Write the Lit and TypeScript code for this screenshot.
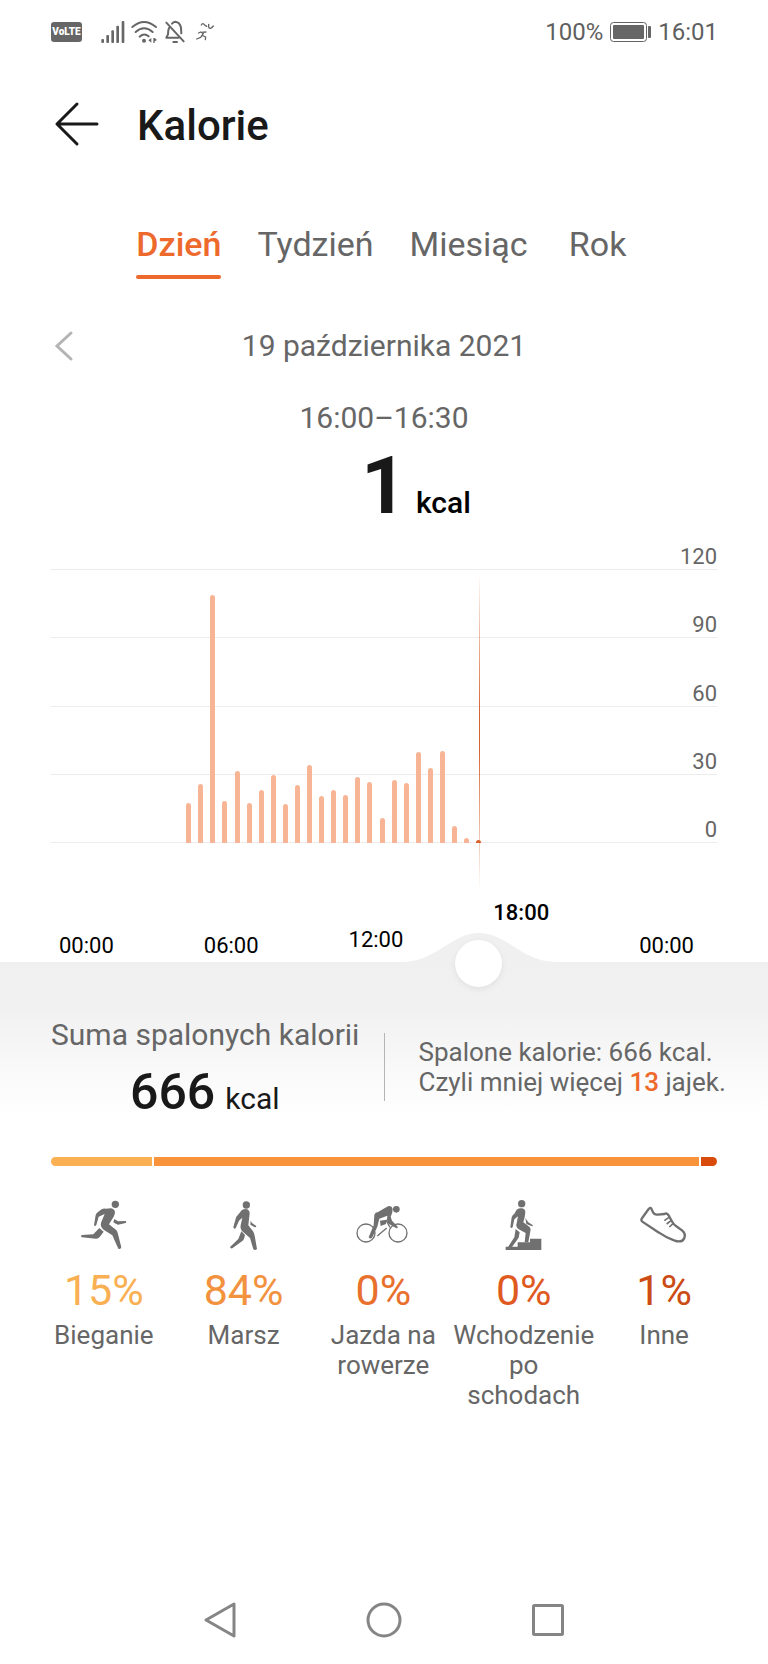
import { LitElement, html, svg, css, type TemplateResult } from "lit";
import { customElement, property, state } from "lit/decorators.js";
import { classMap } from "lit/directives/class-map.js";
import { styleMap } from "lit/directives/style-map.js";

const SLOTS = 48;
const MAX = 120;
const FIRST_SLOT = 8;
const VALUES = [
  17.5, 26, 109, 18.5, 31.5, 17.5, 23.5, 30, 17, 25.5, 34.5, 20.5, 23.5, 21,
  29, 27, 11, 27.5, 26.5, 40, 33, 40.5, 7.5, 2, 1.5,
];

const ICONS: Record<string, TemplateResult> = {
  run: svg`
    <circle cx="109" cy="13" r="11"/>
    <path d="M45 76 50 45Q52 39 57 36L68 28Q73 25 80 26L96 25Q106 27 108 36 108 43 104 50L90 73Q98 80 108 87 114 91 116 98L127 142Q125 149 118 146L100 106 75 90Q63 81 66 68L77 42 59 50 52 75Q48 80 45 76Z"/>
    <path d="M106 57 117 64 140 63Q144 66 140 69L117 74Q111 73 103 67Z"/>
    <path d="M61 84 74 95 62 111Q57 117 50 116L9 112Q3 108 9 105L43 103Z"/>`,
  walk: svg`
    <circle cx="82" cy="15" r="11"/>
    <path d="M43 82 50 56Q51 50 56 46L68 31Q73 27 81 27 92 29 92 40L88 76 102 94Q106 100 107 107L114 147Q109 152 103 148L93 114 69 93Q63 86 65 76L70 53 60 62 50 85Q45 89 43 82Z"/>
    <path d="M95 62 99 69 112 78Q111 83 106 81L94 74Z"/>
    <path d="M67 94 78 105 76 113Q75 118 70 123L40 145Q34 146 33 141L58 117Z"/>`,
  bike: svg`
    <circle class="line" cx="24" cy="99" r="27"/>
    <circle class="line" cx="120" cy="99" r="27"/>
    <circle cx="115" cy="28" r="10"/>
    <path d="M47 76 49 44Q52 37 60 36L90 19Q101 16 104 26 104 40 98 50L102 62 119 80Q120 87 114 84L93 72Q87 68 87 60L88 47 64 56 58 80 43 112Q37 119 32 112Z"/>
    <path d="M66 62 86 59 84 72 68 78Z"/>
    <path class="line" d="M86 84 58 108M84 60 96 82"/>`,
  stairs: svg`
    <circle cx="68" cy="11" r="11"/>
    <path d="M34 81 38 52Q40 45 46 41L53 29Q60 24 69 25 79 27 79 37 78 52 73 67L89 79Q97 85 94 94L88 127H77L80 99 58 87Q49 80 53 70L57 49 46 58 41 82Q37 86 34 81Z"/>
    <path d="M79 54 88 67 102 76 99 79 82 72Z"/>
    <path d="M50 87 62 97 59 113 39 141H27L46 112Z"/>
    <path d="M20 150V140H56V127H93V116H127V150Z"/>`,
  shoe: svg`
    <path class="outline" d="M37 26 42 37Q46 45 56 44L76 42Q83 38 88 45L100 66Q104 74 112 79L130 92Q141 102 136 114 130 130 105 121 80 112 60 98L10 65Q4 60 10 53L29 27Q34 21 37 26Z"/>
    <path class="lace" d="M76 62 90 52M83 72 96 62M91 81 102 71"/>`,
};

@customElement("status-bar")
class StatusBar extends LitElement {
  static styles = css`
    :host { display: flex; justify-content: space-between; align-items: center;
      height: 64px; padding: 0 50px 0 51px; color: #5f5f5f; font-size: 24px; line-height: 32px; }
    .group { display: flex; align-items: center; }
    .volte { background: #666; color: #fff; border-radius: 3px; width: 31px; height: 20px;
      line-height: 20px; font-size: 10px; font-weight: 900; text-align: center; margin-right: 19px; }
    svg { display: block; fill: #666; overflow: visible; }
    .stroke { fill: none; stroke: #666; stroke-width: 6; stroke-linecap: round; stroke-linejoin: round; }
    .thin { stroke-width: 4; }
    .signal { margin-right: 6px; }
    .wifi { margin-right: 7px; }
    .bell { margin-right: 11px; }
    .battery { margin: 0 7px; }
    .shell { fill: none; stroke: #666; stroke-width: 1; }
  `;
  render() {
    return html`
      <div class="group">
        <span class="volte">VoLTE</span>
        <svg class="signal" width="24" height="22" viewBox="0 0 72 66" aria-hidden="true">
          <rect x="1" y="54" width="8" height="12" rx="3"/><rect x="16" y="42" width="8" height="24" rx="3"/>
          <rect x="31" y="28" width="8" height="38" rx="3"/><rect x="46" y="14" width="8" height="52" rx="3"/>
          <rect x="62" y="0" width="8" height="66" rx="3"/>
        </svg>
        <svg class="wifi" width="27" height="22" viewBox="0 0 81 66" aria-hidden="true">
          <path class="stroke" d="M4 18Q39-12 75 18M14 33Q39 11 65 33M26 47Q39 35 53 46"/>
          <circle cx="39" cy="59" r="6"/>
          <path d="M61 51V65L52 58ZM67 51H71L78 57 71 61V66H67Z"/>
        </svg>
        <svg class="bell" width="20" height="22" viewBox="0 0 60 66" aria-hidden="true">
          <path class="stroke" d="M4 5 56 61M12 21Q9 28 9 40L4 50H40M21 8Q25 3 31 2 45 4 48 20L49 37M25 63H36"/>
        </svg>
        <svg width="18" height="18" viewBox="0 0 54 54" aria-hidden="true">
          <path class="stroke thin" d="M2 48 14 43 22 31 14 27 8 30M16 28 30 27M20 38 29 42 28 50M16 6Q20-2 26 6L32 10M38 4V12Q42 22 52 9"/>
        </svg>
      </div>
      <div class="group">
        <span>100%</span>
        <svg class="battery" width="41" height="20" viewBox="0 0 41 20" aria-hidden="true">
          <rect class="shell" x="0.5" y="0.5" width="36" height="19" rx="3"/>
          <rect x="3" y="3" width="31" height="14" rx="1"/><rect x="38" y="4" width="3" height="12" rx="1"/>
        </svg>
        <span>16:01</span>
      </div>`;
  }
}

@customElement("calorie-chart")
class CalorieChart extends LitElement {
  @property({ type: Number }) selected = 32;

  static styles = css`
    :host { display: block; position: relative; padding: 0 51px; }
    .plot { display: grid; height: 298px; }
    .ticks, .bars { grid-area: 1 / 1; }
    .ticks { display: grid; grid-template-rows: 25px repeat(4, 1fr); color: #666;
      font-size: 22px; line-height: 24px; text-align: right; }
    .tick { display: flex; align-items: flex-end; justify-content: flex-end; border-bottom: 1px solid #ececec; }
    .bars { display: grid; grid-template-columns: repeat(48, 1fr); align-items: end;
      margin: 25px 51px 0 35px; }
    .bar { justify-self: center; width: 5px; background: #f8b595; border-radius: 3px 3px 0 0; }
    .active { background: #d9602c; }
    .axis { display: flex; justify-content: space-between; align-items: flex-end;
      height: 119px; padding: 0 23px 0 8px; color: #000; font-size: 22px; line-height: 24px; }
    .time { padding-bottom: 4px; }
    .near { padding-bottom: 10px; }
    .over { padding-bottom: 37px; font-weight: 500; }
    .marker { position: absolute; inset: 0 102px 0 86px; pointer-events: none; }
    .cursor { position: absolute; top: 27px; bottom: 72px; width: 1px;
      background: linear-gradient(transparent, #d5622f 45%, #d5622f 55%, transparent); }
    .bump { position: absolute; bottom: 0; width: 156px; height: 29px; margin-left: -78px; fill: #f0f0f0; }
    .scrub { position: absolute; left: 68px; right: 84px; bottom: -25px; height: 47px; margin: 0;
      appearance: none; background: none; outline: none; }
    .scrub::-webkit-slider-thumb { appearance: none; width: 47px; height: 47px; border-radius: 50%;
      background: #fff; box-shadow: 0 2px 6px rgba(0, 0, 0, 0.07); }
  `;

  private move(e: Event) {
    const detail = Number((e.target as HTMLInputElement).value);
    this.dispatchEvent(new CustomEvent("slot-change", { detail }));
  }

  render() {
    const left = `${((this.selected + 0.5) / SLOTS) * 100}%`;
    const times: [string, string][] = [["00:00", ""], ["06:00", ""], ["12:00", "near"], ["18:00", "over"], ["00:00", ""]];
    return html`
      <div class="plot">
        <div class="ticks">${[120, 90, 60, 30, 0].map((t) => html`<div class="tick">${t}</div>`)}</div>
        <div class="bars">
          ${VALUES.map((v, i) => html`<div
            class=${classMap({ bar: true, active: i + FIRST_SLOT === this.selected })}
            style=${styleMap({ gridColumn: `${i + FIRST_SLOT + 1}`, height: `${(v / MAX) * 100}%` })}></div>`)}
        </div>
      </div>
      <div class="axis">${times.map(([t, c]) => html`<span class="time ${c}">${t}</span>`)}</div>
      <div class="marker">
        <div class="cursor" style=${styleMap({ left })}></div>
        <svg class="bump" style=${styleMap({ left })} viewBox="0 0 156 29" aria-hidden="true">
          <path d="M0 29C36 29 50 0 78 0S120 29 156 29Z"/>
        </svg>
      </div>
      <input class="scrub" type="range" min="0" max="47" aria-label="Godzina"
        .value=${String(this.selected)} @input=${this.move}>`;
  }
}

@customElement("app-root")
class AppRoot extends LitElement {
  @state() private slotIndex = 32;
  @state() private tab = "Dzień";

  static styles = css`
    :host { display: flex; flex-direction: column; min-height: 100vh; background: #fff;
      font-family: Roboto, "Noto Sans", sans-serif; color: #666; }
    button { font: inherit; color: inherit; background: none; border: 0; padding: 0; cursor: pointer; }
    svg { display: block; overflow: visible; }
    .header { display: flex; align-items: center; gap: 38px; height: 120px; padding: 0 55px; }
    .title { margin: 0; padding-top: 3px; font-size: 42px; line-height: 50px; font-weight: 500; color: #191919; }
    .arrow { fill: none; stroke: #191919; stroke-width: 3; stroke-linecap: round; stroke-linejoin: round; }
    .tabs { display: flex; justify-content: center; gap: 36px; margin-top: 40px; font-size: 34px; line-height: 40px; }
    .tab { min-width: 68px; padding-bottom: 11px; border-bottom: 4px solid transparent; }
    .selected { position: relative; color: #ed6a2c; font-weight: 500; }
    .selected::after { content: ""; position: absolute; left: 0; right: 0; bottom: -4px; height: 4px;
      border-radius: 2px; background: #ed6a2c; }
    .date { display: grid; grid-template-columns: 1fr auto 1fr; align-items: center; height: 40px;
      margin-top: 47px; padding: 0 55px; font-size: 30px; line-height: 36px; }
    .prev { justify-self: start; }
    .chevron { fill: none; stroke: #b4b4b4; stroke-width: 3; stroke-linecap: round; }
    .range { margin-top: 34px; font-size: 30px; line-height: 36px; text-align: center; }
    .reading { display: grid; grid-template-columns: 1fr auto 1fr; align-items: baseline; margin-top: 10px;
      font-size: 80px; line-height: 80px; font-weight: 700; color: #191919; }
    .value { grid-column: 2; }
    .unit { padding-left: 9px; font-size: 30px; line-height: 36px; font-weight: 500; color: #000; }
    .chart { margin-top: 19px; }
    .summary { display: grid; grid-template-columns: minmax(0, 1fr) 1px minmax(0, 1fr); align-items: center;
      padding: 55px 51px 0; background: linear-gradient(#f0f0f0, #f1f1f1 30%, #fff); }
    .total { padding-right: 25px; text-align: center; font-size: 30px; line-height: 36px; white-space: nowrap; }
    .sum { display: flex; justify-content: center; align-items: baseline; gap: 10px; height: 50px;
      margin-top: 14px; color: #191919; }
    .sum-value { font-size: 50px; line-height: 50px; font-weight: 500; }
    .divider { height: 68px; background: #b5b5b5; }
    .note { margin: 0; padding-left: 34px; font-size: 26px; line-height: 30px; white-space: nowrap; }
    .accent { color: #ed6a2c; font-weight: 500; }
    .split { display: flex; gap: 2px; height: 9px; margin: 40px 51px 0; border-radius: 5px; overflow: hidden; }
    .part { min-width: 16px; flex-basis: 0; }
    .fill-run { background: #fbb153; }
    .fill-walk { background: #f9933c; }
    .fill-shoe { background: #d94b0d; }
    .kinds { display: grid; grid-template-columns: repeat(5, 1fr); margin: 34px 0 0; padding: 0 34px; list-style: none; }
    .kind { display: flex; flex-direction: column; align-items: center; text-align: center; }
    .icon { fill: #707070; }
    .icon .line { fill: none; stroke: #707070; stroke-width: 4; }
    .icon .outline { fill: none; stroke: #707070; stroke-width: 7; }
    .icon .lace { fill: none; stroke: #707070; stroke-width: 5; }
    .pct { margin-top: 15px; font-size: 43px; line-height: 50px; }
    .label { margin-top: 5px; font-size: 26px; line-height: 30px; }
    .ink-run { color: #f9b053; }
    .ink-walk { color: #f3923e; }
    .ink-bike { color: #e96f2d; }
    .ink-stairs { color: #e05a1f; }
    .ink-shoe { color: #cb4c14; }
    .nav { display: grid; grid-template-columns: repeat(3, 164px); justify-content: center; justify-items: center;
      align-items: center; height: 88px; margin-top: auto; }
    .key { fill: none; stroke: #858585; stroke-width: 3; stroke-linejoin: round; }
  `;

  private get range() {
    const at = (n: number) => `${String(Math.floor(n / 2)).padStart(2, "0")}:${n % 2 ? "30" : "00"}`;
    return `${at(this.slotIndex)}–${at(this.slotIndex + 1)}`;
  }

  private get reading() {
    return Math.floor(VALUES[this.slotIndex - FIRST_SLOT] ?? 0);
  }

  render() {
    const kinds = [
      { id: "run", kcal: 103, pct: 15, label: "Bieganie" },
      { id: "walk", kcal: 556, pct: 84, label: "Marsz" },
      { id: "bike", kcal: 0, pct: 0, label: "Jazda na rowerze" },
      { id: "stairs", kcal: 0, pct: 0, label: "Wchodzenie po schodach" },
      { id: "shoe", kcal: 7, pct: 1, label: "Inne" },
    ];
    return html`
      <status-bar></status-bar>
      <header class="header">
        <button aria-label="Wstecz">
          <svg class="arrow" width="44" height="44" viewBox="0 0 44 44"><path d="M22 2 2 22 22 42M2 22H42"/></svg>
        </button>
        <h1 class="title">Kalorie</h1>
      </header>
      <nav class="tabs">
        ${["Dzień", "Tydzień", "Miesiąc", "Rok"].map((t) => html`<button
          class=${classMap({ tab: true, selected: t === this.tab })}
          @click=${() => (this.tab = t)}>${t}</button>`)}
      </nav>
      <div class="date">
        <button class="prev" aria-label="Poprzedni dzień">
          <svg class="chevron" width="18" height="30" viewBox="0 0 18 30"><path d="M16 2 2 15 16 28"/></svg>
        </button>
        <span>19 października 2021</span>
      </div>
      <div class="range">${this.range}</div>
      <div class="reading"><span class="value">${this.reading}</span><span class="unit">kcal</span></div>
      <calorie-chart class="chart" .selected=${this.slotIndex}
        @slot-change=${(e: CustomEvent<number>) => (this.slotIndex = e.detail)}></calorie-chart>
      <section class="summary">
        <div class="total">
          <div>Suma spalonych kalorii</div>
          <div class="sum"><span class="sum-value">666</span><span>kcal</span></div>
        </div>
        <div class="divider"></div>
        <p class="note">Spalone kalorie: 666 kcal.<br>Czyli mniej więcej <span class="accent">13</span> jajek.</p>
      </section>
      <div class="split">
        ${kinds.filter((k) => k.kcal > 0).map((k) => html`<div class="part fill-${k.id}"
          style=${styleMap({ flexGrow: String(k.kcal) })}></div>`)}
      </div>
      <ul class="kinds">
        ${kinds.map((k) => html`<li class="kind">
          <svg class="icon" width="50" height="50" viewBox="0 0 150 150" aria-hidden="true">${ICONS[k.id]}</svg>
          <span class="pct ink-${k.id}">${k.pct}%</span>
          <span class="label">${k.label}</span>
        </li>`)}
      </ul>
      <nav class="nav">
        <button aria-label="Wróć"><svg class="key" width="34" height="36" viewBox="0 0 34 36"><path d="M31 2V34L3 18Z"/></svg></button>
        <button aria-label="Ekran główny"><svg class="key" width="36" height="36" viewBox="0 0 36 36"><circle cx="18" cy="18" r="16"/></svg></button>
        <button aria-label="Ostatnie"><svg class="key" width="32" height="32" viewBox="0 0 32 32"><rect x="1.5" y="1.5" width="29" height="29" rx="1"/></svg></button>
      </nav>`;
  }
}
